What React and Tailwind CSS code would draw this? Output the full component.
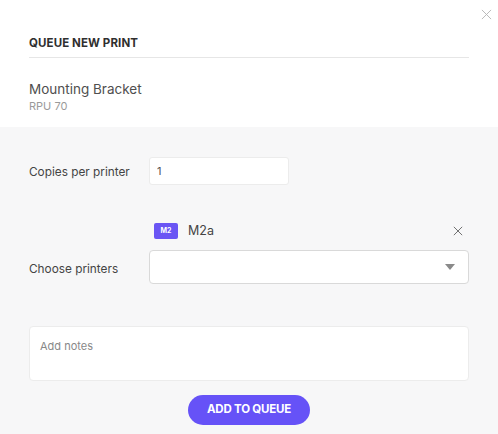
import { useState } from "react";

function CloseIcon({ className }) {
  return (
    <svg viewBox="0 0 12 12" className={className} fill="none" stroke="currentColor" strokeWidth="1">
      <path d="M1 1 L11 11 M11 1 L1 11" />
    </svg>
  );
}

export default function App() {
  const [copies, setCopies] = useState("1");
  const [notes, setNotes] = useState("");

  return (
    <div
      className="relative w-[498px] h-[434px] bg-[#f7f7f8] overflow-hidden"
      style={{ fontFamily: "Inter, 'Liberation Sans', sans-serif" }}
    >
      {/* close */}
      <button className="absolute top-[9px] right-[6px] text-[#b5b5b5]">
        <CloseIcon className="w-[11px] h-[11px]" />
      </button>

      {/* header */}
      <div className="bg-white px-[29px] pt-[35px] pb-[14px]">
        <div className="pb-[6px] border-b border-[#e6e6e6] text-[11.5px] leading-[16px] font-bold text-[#2f2f2f] tracking-[0.1px]">
          QUEUE NEW PRINT
        </div>
        <div className="mt-[21px] text-[13.5px] leading-[20px] text-[#4f4f4f]">Mounting Bracket</div>
        <div className="text-[11px] leading-[14px] text-[#9a9a9a]">RPU 70</div>
      </div>

      {/* form */}
      <div className="px-[29px] pt-[30px]">
        <div className="flex items-center">
          <label className="w-[120px] pt-[3px] text-[11.8px] text-[#444]">Copies per printer</label>
          <input
            value={copies}
            onChange={(e) => setCopies(e.target.value)}
            className="w-[140px] h-[28px] bg-white border border-[#ececec] rounded-[3px] px-[7px] text-[11px] text-[#555] outline-none"
          />
        </div>

        <div className="mt-[38px] ml-[120px] flex items-center h-[16px]">
          <span className="ml-[5px] w-[24px] h-[16px] rounded-[2px] bg-[#6a55f4] text-white text-[7px] font-bold flex items-center justify-center">
            M2
          </span>
          <span className="ml-[10px] text-[12.5px] text-[#444]">M2a</span>
          <CloseIcon className="ml-auto mr-[6px] w-[10px] h-[10px] text-[#555]" />
        </div>

        <div className="mt-[11px] flex items-center">
          <label className="w-[120px] pt-[5px] text-[11.8px] text-[#444]">Choose printers</label>
          <div className="flex-1 h-[34px] bg-white border border-[#d9d9d9] rounded-[4px] flex items-center justify-end pr-[13px]">
            <svg viewBox="0 0 10 6" className="w-[10px] h-[6px] text-[#8a8a8a]" fill="currentColor">
              <path d="M0 0 H10 L5 6 Z" />
            </svg>
          </div>
        </div>

        <textarea
          value={notes}
          onChange={(e) => setNotes(e.target.value)}
          placeholder="Add notes"
          className="mt-[42px] block w-full h-[55px] bg-white border border-[#ececec] rounded-[4px] px-[10px] py-[11px] text-[11px] text-[#555] placeholder:text-[#888] resize-none outline-none"
        />

        <div className="mt-[14px] flex justify-center">
          <button className="w-[122px] h-[30px] rounded-full bg-[#6652f7] text-white text-[11.5px] font-bold tracking-[-0.2px]">
            ADD TO QUEUE
          </button>
        </div>
      </div>
    </div>
  );
}
